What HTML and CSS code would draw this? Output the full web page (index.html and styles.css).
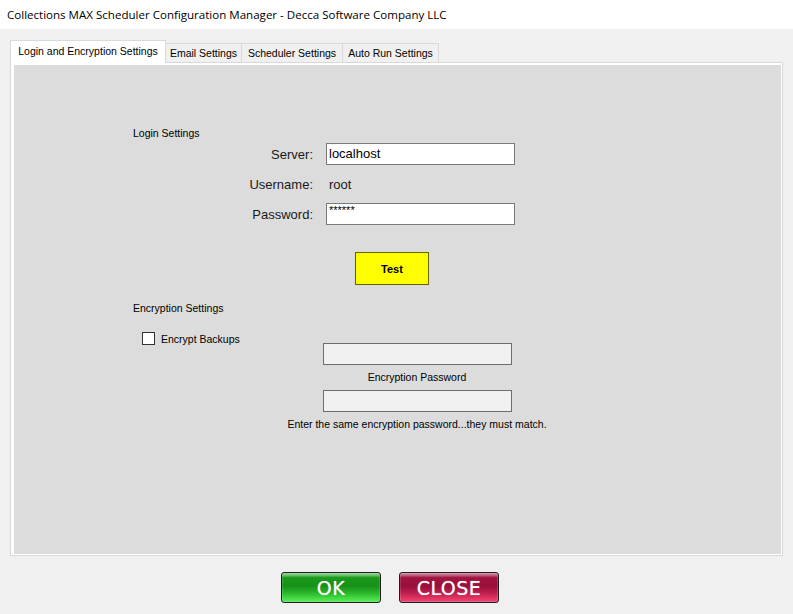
FILE: index.html
```html
<!DOCTYPE html>
<html>
<head>
<meta charset="utf-8">
<title>Collections MAX Scheduler Configuration Manager</title>
<link rel="stylesheet" href="styles.css">
</head>
<body>
<div class="window">
  <div class="titlebar">Collections MAX Scheduler Configuration Manager - Decca Software Company LLC</div>
  <div class="tabs">
    <div class="tab selected">Login and Encryption Settings</div>
    <div class="tab t-email">Email Settings</div>
    <div class="tab t-sched">Scheduler Settings</div>
    <div class="tab t-auto">Auto Run Settings</div>
  </div>
  <div class="panel">
    <div class="panel-inner">
      <div class="section-title login-title">Login Settings</div>
      <div class="login-grid">
        <div class="lbl">Server:</div>
        <div class="textbox">localhost</div>
        <div class="lbl">Username:</div>
        <div class="value">root</div>
        <div class="lbl">Password:</div>
        <div class="textbox pw">******</div>
      </div>
      <div class="test-btn">Test</div>
      <div class="section-title enc-title">Encryption Settings</div>
      <div class="enc-grid">
        <div class="check-row">
          <span class="checkbox"></span>
          <span class="check-label">Encrypt Backups</span>
        </div>
        <div class="enc-stack">
          <div class="textbox disabled"></div>
          <div class="small-text enc-label">Encryption Password</div>
          <div class="textbox disabled"></div>
          <div class="small-text hint">Enter the same encryption password...they must match.</div>
        </div>
      </div>
    </div>
  </div>
  <div class="buttons">
    <div class="gbtn ok">OK</div>
    <div class="gbtn close">CLOSE</div>
  </div>
</div>
</body>
</html>
```
FILE: styles.css
```css
html, body {
  margin: 0;
  padding: 0;
}
body {
  width: 793px;
  height: 614px;
  background: #f0f0f0;
  font-family: "Liberation Sans", Arial, sans-serif;
  color: #000;
  overflow: hidden;
}
.window {
  width: 793px;
  height: 614px;
  display: flex;
  flex-direction: column;
}
.titlebar {
  height: 29px;
  background: #fff;
  font-family: "Open Sans", "Noto Sans", sans-serif;
  font-size: 11.55px;
  line-height: 29px;
  padding-left: 7px;
  box-sizing: border-box;
  color: #000;
  white-space: nowrap;
}
.tabs {
  display: flex;
  align-items: flex-end;
  margin-top: 11px;
  margin-left: 10px;
  height: 22px;
  position: relative;
  z-index: 2;
}
.tab {
  height: 19px;
  box-sizing: border-box;
  border: 1px solid #d9d9d9;
  border-bottom: none;
  border-left: none;
  background: #f0f0f0;
  font-size: 10.5px;
  line-height: 19px;
  text-align: center;
  white-space: nowrap;
}
.t-email { width: 76px; }
.t-sched { width: 101px; }
.t-auto { width: 96px; }
.tab.selected {
  border-left: 1px solid #d9d9d9;
  border-right: 1px solid #d9d9d9;
  background: #fff;
  line-height: 20px;
  width: 156px;
  margin-bottom: -1px;
  height: 23px;
}
.panel {
  margin-left: 10px;
  width: 773px;
  height: 494px;
  box-sizing: border-box;
  border: 1px solid #d9d9d9;
  background: #fff;
  padding: 2px 1px 1px 3px;
}
.panel-inner {
  background: #dcdcdc;
  height: 100%;
  box-sizing: border-box;
  padding-top: 62px;
  padding-left: 119px;
}
.section-title {
  font-size: 10.5px;
  line-height: 13px;
  color: #000;
}
.login-grid {
  display: grid;
  grid-template-columns: 180px 189px;
  column-gap: 13px;
  row-gap: 8px;
  grid-auto-rows: 22px;
  margin-top: 3px;
  align-items: center;
}
.lbl {
  text-align: right;
  font-size: 13px;
  color: #1a1a1a;
}
.value {
  font-size: 13px;
  padding-left: 3px;
  color: #1a1a1a;
}
.textbox {
  height: 22px;
  box-sizing: border-box;
  border: 1px solid #7a7a7a;
  background: #fff;
  font-size: 13px;
  line-height: 19px;
  padding-left: 2px;
  width: 189px;
}
.textbox.pw {
  font-size: 11px;
  line-height: 13px;
}
.textbox.disabled {
  background: #f0f0f0;
  border-color: #6d6d6d;
}
.test-btn {
  width: 74px;
  height: 33px;
  box-sizing: border-box;
  margin-top: 27px;
  margin-left: 222px;
  background: #ffff00;
  border: 1px solid #646400;
  font-size: 11px;
  font-weight: bold;
  display: flex;
  align-items: center;
  justify-content: center;
}
.enc-title {
  margin-top: 17px;
}
.enc-grid {
  display: grid;
  grid-template-columns: 152px 264px;
  margin-top: 17px;
}
.check-row {
  display: flex;
  align-items: center;
  height: 13px;
  padding-left: 9px;
  gap: 6px;
}
.checkbox {
  width: 13px;
  height: 13px;
  box-sizing: border-box;
  border: 1px solid #333;
  background: #fff;
  flex: none;
}
.check-label {
  font-size: 10.5px;
  white-space: nowrap;
}
.enc-stack {
  display: flex;
  flex-direction: column;
  align-items: center;
  padding-top: 11px;
}
.small-text {
  font-size: 10.5px;
  line-height: 13px;
  white-space: nowrap;
}
.enc-label {
  margin: 6px 0 6px;
}
.hint {
  margin-top: 6px;
}
.buttons {
  display: flex;
  gap: 18px;
  margin-left: 281px;
  margin-top: 16px;
}
.gbtn {
  width: 100px;
  height: 31px;
  box-sizing: border-box;
  border: 1px solid #1e1e1e;
  border-radius: 3px;
  color: #fff;
  font-family: "Comic Sans MS", "DejaVu Sans", sans-serif;
  font-size: 19px;
  display: flex;
  align-items: center;
  justify-content: center;
  letter-spacing: 0.5px;
  text-shadow: 0 0 1px rgba(255,255,255,0.6);
}
.ok {
  background: linear-gradient(#8fd38f 0%, #6cc26c 8%, #1c9a1c 16%, #189018 45%, #2cb82c 70%, #45dd45 88%, #5aea5a 100%);
  box-shadow: inset 0 0 0 1px rgba(255,255,255,0.15);
}
.close {
  background: linear-gradient(#d08ca4 0%, #c06080 8%, #a11440 16%, #980f3a 45%, #c0204f 70%, #e33664 88%, #ea4a74 100%);
  box-shadow: inset 0 0 0 1px rgba(255,255,255,0.15);
}
```
